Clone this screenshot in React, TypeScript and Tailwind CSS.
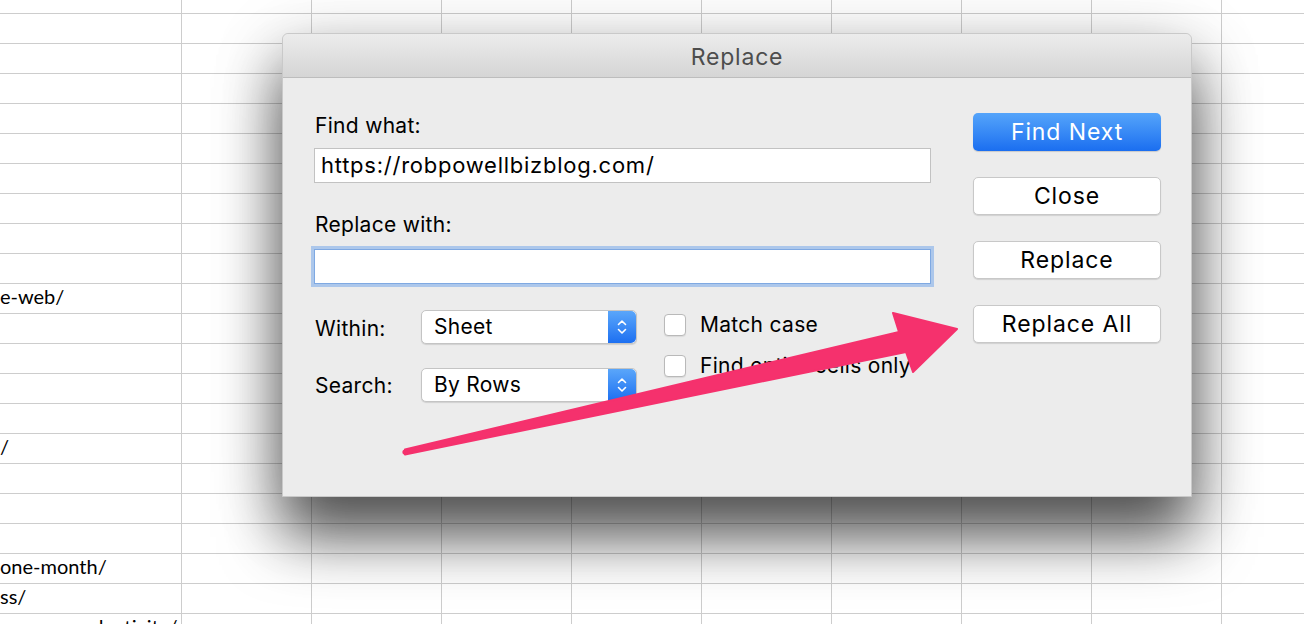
import React from 'react'

const sans = { fontFamily: 'Inter, "Liberation Sans", sans-serif' }

// Column A holds long URLs scrolled off to the left; only their tails show.
const cellText: Record<number, string> = {
  10: 'e-web/',
  15: '/',
  19: 'one-month/',
  20: 'ss/',
  21: 's-your-productivity/',
}

function Sheet() {
  const rows = Array.from({ length: 22 }, (_, i) => i)
  const cols = Array.from({ length: 9 }, (_, i) => i)
  return (
    <div className="flex flex-col" style={{ fontFamily: 'Lato, "Open Sans", sans-serif' }}>
      {rows.map((r) => (
        <div
          key={r}
          className={`flex shrink-0 border-b border-[#cdcdcd] ${r === 0 ? 'h-[14px]' : 'h-[30px]'}`}
        >
          <div className="relative flex w-[182px] shrink-0 items-center border-r border-[#cdcdcd]">
            {cellText[r] && (
              <span className="absolute left-0 -mt-[5px] whitespace-nowrap text-[20px] leading-none text-black">
                {cellText[r]}
              </span>
            )}
          </div>
          {cols.map((c) => (
            <div key={c} className="w-[130px] shrink-0 border-r border-[#cdcdcd]" />
          ))}
          <div className="flex-1" />
        </div>
      ))}
    </div>
  )
}

function Stepper() {
  return (
    <div className="flex h-full w-[28px] items-center justify-center rounded-r-[5px] bg-gradient-to-b from-[#5aa6fa] to-[#1c6ff1]">
      <svg viewBox="0 0 10 18" className="h-[18px] w-[10px]" fill="none" stroke="white" strokeWidth="1.6" strokeLinecap="round" strokeLinejoin="round">
        <path d="M1.5 6.5 5 3l3.5 3.5M1.5 11.5 5 15l3.5-3.5" />
      </svg>
    </div>
  )
}

function Select({ value }: { value: string }) {
  return (
    <div className="flex h-[34px] w-[216px] items-stretch rounded-[5px] border border-[#c4c4c4] bg-white shadow-[0_1px_1px_rgba(0,0,0,0.12)]">
      <span className="flex flex-1 items-center pl-[12px] text-[21px] tracking-[0.3px] text-black">{value}</span>
      <Stepper />
    </div>
  )
}

function Check({ label }: { label: string }) {
  return (
    <div className="flex h-[22px] items-center">
      <div className="h-[22px] w-[22px] rounded-[4px] border border-[#b9b9b9] bg-white shadow-[0_1px_1px_rgba(0,0,0,0.08)]" />
      <span className="ml-[14px] whitespace-nowrap text-[21px] tracking-[0.3px] text-black">{label}</span>
    </div>
  )
}

function Button({ label, primary }: { label: string; primary?: boolean }) {
  return (
    <div
      className={
        primary
          ? 'flex h-[38px] items-center justify-center rounded-[5px] bg-gradient-to-b from-[#55a4fa] to-[#1a6ef0] text-[23px] tracking-[0.9px] text-white shadow-[0_1px_1px_rgba(0,0,0,0.15)]'
          : 'flex h-[38px] items-center justify-center rounded-[5px] border border-[#c8c8c8] bg-white text-[23px] tracking-[0.9px] text-black shadow-[0_1px_1px_rgba(0,0,0,0.12)]'
      }
    >
      {label}
    </div>
  )
}

function ReplaceDialog() {
  return (
    <div
      className="absolute left-[282px] top-[33px] flex h-[464px] w-[910px] flex-col rounded-t-[6px] border border-[#c9c9c9] bg-[#ececec] shadow-[0_40px_60px_rgba(0,0,0,0.62),0_14px_70px_rgba(0,0,0,0.22)]"
      style={sans}
    >
      <div className="flex h-[44px] shrink-0 items-center justify-center rounded-t-[6px] border-b border-[#bdbdbd] bg-gradient-to-b from-[#ececec] to-[#d5d5d5] pt-[3px] text-[23px] tracking-[0.8px] text-[#4d4d4d]">
        Replace
      </div>

      <div className="flex pl-[31px] pt-[34px]">
        <div className="flex w-[617px] flex-col">
          <div className="mt-[2px] h-6 pl-px text-[21px] leading-6 tracking-[0.3px] text-black">Find what:</div>
          <div className="mt-[10px] flex h-[35px] items-center border border-[#c2c2c2] bg-white pl-[6px] text-[22px] tracking-[0.75px] text-black">
            https://robpowellbizblog.com/
          </div>

          <div className="mt-[30px] h-6 pl-px text-[21px] leading-6 tracking-[0.3px] text-black">Replace with:</div>
          <div className="mt-[12px] h-[35px] border border-[#7fa9e2] bg-white shadow-[0_0_0_3px_rgba(120,170,235,0.55)]" />

          <div className="mt-[26px] flex">
            <div className="flex flex-col">
              <div className="flex h-[34px] items-center">
                <span className="mt-[4px] w-[107px] pl-px text-[21px] tracking-[0.3px] text-black">Within:</span>
                <Select value="Sheet" />
              </div>
              <div className="mt-[24px] flex h-[34px] items-center">
                <span className="mt-[2px] w-[107px] pl-px text-[21px] tracking-[0.3px] text-black">Search:</span>
                <Select value="By Rows" />
              </div>
            </div>
            <div className="ml-[27px] mt-[4px] flex flex-col gap-[19px]">
              <Check label="Match case" />
              <Check label="Find entire cells only" />
            </div>
          </div>
        </div>

        <div className="ml-[42px] flex w-[188px] flex-col gap-[26px] pt-px">
          <Button label="Find Next" primary />
          <Button label="Close" />
          <Button label="Replace" />
          <Button label="Replace All" />
        </div>
      </div>
    </div>
  )
}

function Arrow() {
  return (
    <svg viewBox="0 0 1304 624" className="pointer-events-none absolute inset-0 h-[624px] w-[1304px]">
      <path
        d="M405 449.5 L899 332 L893 313 L957 329 L913 372 L906 352 L405 454.5 Z"
        fill="#f5316d"
        stroke="#f5316d"
        strokeWidth="2"
        strokeLinejoin="round"
      />
      <circle cx="405" cy="452" r="2.6" fill="#f5316d" />
    </svg>
  )
}

export default function App() {
  return (
    <div className="relative h-[624px] w-[1304px] overflow-hidden bg-white">
      <Sheet />
      <ReplaceDialog />
      <Arrow />
    </div>
  )
}
